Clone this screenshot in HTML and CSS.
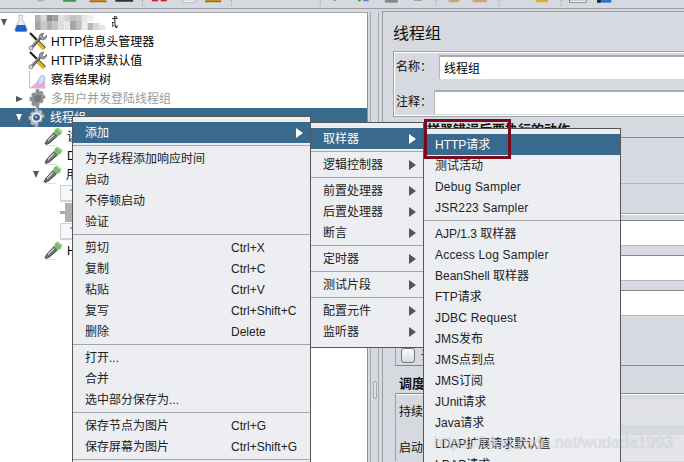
FILE: index.html
```html
<!DOCTYPE html>
<html lang="zh">
<head>
<meta charset="utf-8">
<title>JMeter</title>
<link rel="stylesheet" href="styles.css">
</head>
<body>
<svg class="defs" width="0" height="0">
  <defs>
    <symbol id="tools" viewBox="0 0 19 19">
      <path d="M2 1 L17 16" stroke="#222" stroke-width="2.2" fill="none"/>
      <path d="M9 10 L15 16" stroke="#e8b020" stroke-width="3.6" stroke-linecap="round" fill="none"/>
      <path d="M3 16 L13 5" stroke="#8d8f93" stroke-width="3" fill="none"/>
      <path d="M3.5 17 L13.5 5.5" stroke="#333" stroke-width="1" fill="none"/>
      <path d="M12 2.5 L15.5 1 L14 4.5 L16 6 L18.5 3.5 C18.8 6.5 16.5 8.5 13.5 7.5 C11.5 6.5 11 4 12 2.5Z" fill="#a5a7ab" stroke="#444" stroke-width=".7"/>
      <circle cx="3" cy="16" r="2" fill="#ddd" stroke="#666" stroke-width=".7"/>
    </symbol>
    <symbol id="gear" viewBox="0 0 19 19">
      <path d="M8 0h3l.6 2.6 2-.9 2.2 2.2-1 2 2.6.7v3l-2.6.7.9 2-2.1 2.200-2-1L11 19H8l-.7-2.600-2 1-2.100-2.100.9-2L1.500 11.200v-3l2.600-.7-1-2L5.300 3.300l2 .9z" fill="#8f9194"/>
      <circle cx="9.500" cy="9.500" r="3.500" fill="#76787b"/>
    </symbol>
    <symbol id="gear-on" viewBox="0 0 19 19">
      <path d="M8 0h3l.6 2.600 2-.9 2.200 2.200-1 2 2.600.7v3l-2.600.7.9 2-2.100 2.200-2-1L11 19H8l-.7-2.600-2 1-2.100-2.100.9-2L1.500 11.200v-3l2.600-.7-1-2L5.300 3.300l2 .9z" fill="#b9bbbe" stroke="#777" stroke-width=".5"/>
      <circle cx="9.500" cy="9.500" r="5" fill="#eef1f5"/>
      <circle cx="9.500" cy="9.500" r="3.300" fill="#2f5f9e"/>
      <circle cx="9" cy="9" r="1.300" fill="#8fb3e0"/>
    </symbol>
    <symbol id="dropper" viewBox="0 0 19 19">
      <path d="M1 18 C6 19 10 18.500 13 18" stroke="#ddd" stroke-width="1" fill="none"/>
      <path d="M1 16.500 L3 13 L10 5.500 L13.500 9 L5.500 16 L2 17.500Z" fill="#6f7276" stroke="#2e3033" stroke-width=".8"/>
      <path d="M4 13.500 L10 7.500" stroke="#d8dadd" stroke-width="1.100"/>
      <path d="M11 2.500 L14 0.500 L18.500 4 L16.500 8 L13.500 9 L10 5.500Z" fill="#7cb96a"/>
      <path d="M14 1.500 L17.500 4.500" stroke="#b9e2a8" stroke-width="1.400"/>
    </symbol>
  </defs>
</svg>

<div class="page">
  <header class="toolbar">
    <svg class="toolbar-art" width="684" height="9" viewBox="0 0 684 9">
      <rect x="0" y="0" width="6" height="1" fill="#fff" stroke="#777" stroke-width=".5"/>
      <rect x="28" y="0" width="15" height="2" rx="1" fill="#3e9b3e"/>
      <rect x="58" y="0" width="19" height="2" fill="#c88a1e"/><rect x="58" y="1.500" width="19" height="1" fill="#7e5c1e"/>
      <rect x="87" y="0" width="20" height="2" fill="#35373a"/>
      <rect x="128" y="0" width="7" height="1.500" fill="#cc2020"/><rect x="138" y="0" width="7" height="1.500" fill="#cc2020"/>
      <rect x="163" y="0" width="14" height="2.500" fill="#f4f4f4" stroke="#8a8a8a" stroke-width=".5"/>
      <rect x="188" y="0" width="18" height="2" fill="#c88a1e"/><rect x="188" y="1.500" width="18" height="1" fill="#7e5c1e"/>
      <rect x="333" y="0" width="2" height="1" fill="#2fa02f"/>
      <rect x="360" y="0" width="3" height="1.500" fill="#3c9c50"/><rect x="366" y="0" width="6" height="1.500" fill="#5c86c8"/>
      <rect x="390" y="0" width="15" height="3" rx="1.500" fill="#85878a"/>
      <rect x="423" y="0" width="9" height="1" fill="#9a9a9a"/>
      <rect x="462" y="0" width="12" height="2.500" fill="#c8a87a"/>
      <rect x="489" y="0" width="16" height="2.500" fill="#c8a87a"/>
      <rect x="560" y="0" width="14" height="2.500" fill="#d4b030"/>
      <rect x="598" y="0" width="19" height="2.500" fill="#fff" stroke="#555" stroke-width=".7"/>
      <rect x="629" y="0" width="16" height="3" fill="#2f72c8"/><rect x="629" y="0" width="4" height="3" fill="#222"/>
      <path d="M117.500 0V8M217.500 0V8M317.500 0V8M447.500 0V8M518.500 0V8M588.500 0V8" stroke="#85878c" stroke-dasharray="1 2"/>
    </svg>
  </header>

  <main class="workspace">
    <nav class="tree">
      <div class="row lvl0">
        <span class="twist open"></span>
        <svg class="icon flask" viewBox="0 0 14 18" width="14" height="18">
          <path d="M5 1h3.500v5L13.500 15.500 12.500 17.500H1.500L.5 15.500 5 6Z" fill="#e8eef6" stroke="#a9b3c4" stroke-width=".8"/>
          <path d="M3 11h8l2 5-1 1.500H2L1 16Z" fill="#1d62c4"/>
        </svg>
        <svg class="mosaic" viewBox="0 0 79 15" width="77" height="15" preserveAspectRatio="none">
          <rect x="0" y="0" width="79" height="15" fill="#fff"/>
          <rect x="0" width="6" height="6" fill="#b4b4b4"/><rect x="6" width="6" height="6" fill="#d8d8d8"/><rect x="12" width="6" height="6" fill="#8d8d8d"/><rect x="18" width="6" height="6" fill="#9e9e9e"/><rect x="24" width="6" height="6" fill="#e2e2e2"/><rect x="30" width="6" height="6" fill="#d4d4d4"/><rect x="36" width="6" height="6" fill="#c0c0c0"/><rect x="42" width="6" height="6" fill="#c9c9c9"/><rect x="48" width="6" height="6" fill="#e6e6e6"/><rect x="54" width="6" height="6" fill="#f0f0f0"/>
          <rect x="0" y="6" width="6" height="9" fill="#a6a6a6"/><rect x="6" y="6" width="6" height="9" fill="#c8c8c8"/><rect x="12" y="6" width="6" height="9" fill="#b0b0b0"/><rect x="18" y="6" width="6" height="9" fill="#c4c4c4"/><rect x="24" y="6" width="6" height="9" fill="#dedede"/><rect x="30" y="6" width="6" height="9" fill="#e8e8e8"/><rect x="36" y="6" width="6" height="9" fill="#a4a4a4"/><rect x="42" y="6" width="6" height="9" fill="#bdbdbd"/><rect x="48" y="6" width="6" height="9" fill="#ececec"/><rect x="54" y="8" width="6" height="7" fill="#b8b8b8"/><rect x="60" y="8" width="6" height="7" fill="#d8d8d8"/><rect x="66" y="10" width="6" height="5" fill="#e4e4e4"/>
        </svg>
        <span class="label tail">试</span>
      </div>
      <div class="row lvl1"><svg class="icon" width="19" height="19"><use href="#tools"/></svg><span class="label">HTTP信息头管理器</span></div>
      <div class="row lvl1"><svg class="icon" width="19" height="19"><use href="#tools"/></svg><span class="label">HTTP请求默认值</span></div>
      <div class="row lvl1">
        <svg class="icon" viewBox="0 0 19 19" width="19" height="19">
          <path d="M1.500 1V18H18" stroke="#bfc0c4" fill="none"/>
          <path d="M2 18 C6 14 9 13 11 9 C12 5 16 4 17 7 L17 18Z" fill="#f4a6d8"/>
          <path d="M10 14 C10 8 13 5 16 6 C18 8 16 13 12 15Z" fill="#cfe3f5" stroke="#8ab4dc" stroke-width=".7"/>
        </svg>
        <span class="label">察看结果树</span>
      </div>
      <div class="row lvl1 has-twist"><span class="twist closed"></span><svg class="icon" width="19" height="19"><use href="#gear"/></svg><span class="label muted">多用户并发登陆线程组</span></div>
      <div class="row lvl1 has-twist selected"><span class="twist open on"></span><svg class="icon" width="19" height="19"><use href="#gear-on"/></svg><span class="label">线程组</span></div>
      <div class="row lvl2"><svg class="icon" width="19" height="19"><use href="#dropper"/></svg><span class="label">读取配置</span></div>
      <div class="row lvl2"><svg class="icon" width="19" height="19"><use href="#dropper"/></svg><span class="label">Debug</span></div>
      <div class="row lvl2 has-twist"><span class="twist open"></span><svg class="icon" width="19" height="19"><use href="#dropper"/></svg><span class="label">用户登录</span></div>
      <div class="row lvl3"><span class="doc"></span></div>
      <div class="row lvl3"><span class="plug"></span></div>
      <div class="row lvl3"><span class="doc"></span></div>
      <div class="row lvl2"><svg class="icon" width="19" height="19"><use href="#dropper"/></svg><span class="label">HTTP请求</span></div>
    </nav>

    <div class="splitter"><span class="grip"></span></div>

    <section class="panel">
      <h1 class="panel-title">线程组</h1>
      <div class="box name-box">
        <div class="name-row">
          <span class="name-label">名称：</span>
          <span class="name-input">线程组</span>
        </div>
        <div class="name-row note">
          <span class="name-label short">注释：</span>
          <span class="name-input"></span>
        </div>
      </div>

      <h2 class="group-title action-title">在取样器错误后要执行的动作</h2>
      <div class="action-box"></div>

      <div class="props">
        <div class="prop"><span class="prop-label">线程数：</span><span class="prop-input"></span></div>
        <div class="prop"><span class="prop-label">Ramp-Up时间（秒）：</span><span class="prop-input"></span></div>
        <div class="prop"><span class="prop-label">循环次数</span><span class="prop-input"></span></div>
        <div class="check-row"><span class="check"></span><span class="check-text">调度器</span></div>
      </div>

      <h2 class="group-title sched-title">调度器配置</h2>
      <div class="sched">
        <div class="sched-row first"><span>持续时间（秒）</span><span class="sched-input"></span></div>
        <div class="sched-row"><span>启动延迟（秒）</span><span class="sched-input alt"></span></div>
      </div>
    </section>
  </main>
</div>

<div class="menu menu-main">
  <div class="item active"><span class="text">添加</span><span class="arrow"></span></div>
  <div class="sep"></div>
  <div class="item"><span class="text">为子线程添加响应时间</span></div>
  <div class="item"><span class="text">启动</span></div>
  <div class="item"><span class="text">不停顿启动</span></div>
  <div class="item"><span class="text">验证</span></div>
  <div class="sep"></div>
  <div class="item"><span class="text">剪切</span><span class="key">Ctrl+X</span></div>
  <div class="item"><span class="text">复制</span><span class="key">Ctrl+C</span></div>
  <div class="item"><span class="text">粘贴</span><span class="key">Ctrl+V</span></div>
  <div class="item"><span class="text">复写</span><span class="key">Ctrl+Shift+C</span></div>
  <div class="item"><span class="text">删除</span><span class="key">Delete</span></div>
  <div class="sep"></div>
  <div class="item"><span class="text">打开...</span></div>
  <div class="item"><span class="text">合并</span></div>
  <div class="item"><span class="text">选中部分保存为...</span></div>
  <div class="sep"></div>
  <div class="item"><span class="text">保存节点为图片</span><span class="key">Ctrl+G</span></div>
  <div class="item"><span class="text">保存屏幕为图片</span><span class="key">Ctrl+Shift+G</span></div>
  <div class="sep"></div>
</div>

<div class="menu menu-add">
  <div class="item active"><span class="text">取样器</span><span class="arrow"></span></div>
  <div class="sep"></div>
  <div class="item"><span class="text">逻辑控制器</span><span class="arrow"></span></div>
  <div class="sep"></div>
  <div class="item"><span class="text">前置处理器</span><span class="arrow"></span></div>
  <div class="item"><span class="text">后置处理器</span><span class="arrow"></span></div>
  <div class="item"><span class="text">断言</span><span class="arrow"></span></div>
  <div class="sep"></div>
  <div class="item"><span class="text">定时器</span><span class="arrow"></span></div>
  <div class="sep"></div>
  <div class="item"><span class="text">测试片段</span><span class="arrow"></span></div>
  <div class="sep"></div>
  <div class="item"><span class="text">配置元件</span><span class="arrow"></span></div>
  <div class="item"><span class="text">监听器</span><span class="arrow"></span></div>
</div>

<div class="menu menu-sampler">
  <div class="item active"><span class="text">HTTP请求</span></div>
  <div class="item"><span class="text">测试活动</span></div>
  <div class="item"><span class="text latin">Debug Sampler</span></div>
  <div class="item"><span class="text latin">JSR223 Sampler</span></div>
  <div class="sep"></div>
  <div class="item"><span class="text">AJP/1.3 取样器</span></div>
  <div class="item"><span class="text latin">Access Log Sampler</span></div>
  <div class="item"><span class="text">BeanShell 取样器</span></div>
  <div class="item"><span class="text">FTP请求</span></div>
  <div class="item"><span class="text latin">JDBC Request</span></div>
  <div class="item"><span class="text">JMS发布</span></div>
  <div class="item"><span class="text">JMS点到点</span></div>
  <div class="item"><span class="text">JMS订阅</span></div>
  <div class="item"><span class="text">JUnit请求</span></div>
  <div class="item"><span class="text">Java请求</span></div>
  <div class="item"><span class="text">LDAP扩展请求默认值</span></div>
  <div class="item"><span class="text">LDAP请求</span></div>
</div>

<div class="callout"></div>
<div class="watermark">https://blog.csdn.net/wudada1993</div>
</body>
</html>
```

FILE: styles.css
```css
* { box-sizing: border-box; }
html, body { margin: 0; padding: 0; width: 684px; height: 462px; overflow: hidden; }
body {
  position: relative;
  font: 12px/1 "Liberation Sans", "Noto Sans CJK SC", sans-serif;
  color: #1c1c1c;
  background: #d6d9df;
}
.defs { position: absolute; }

.page { display: flex; flex-direction: column; height: 462px; }

.toolbar { height: 12px; flex: none; background: #d6d9df; }
.toolbar-art { display: block; border-bottom: 1px solid #9a9ca3; }

.workspace { display: flex; flex: 1; min-height: 0; }

/* tree */
.tree { width: 368px; flex: none; background: #fff; border-top: 1px solid #a4a6ac; border-right: 1px solid #8d8f95; }
.row { display: flex; align-items: center; height: 19px; font-size: 12px; color: #000; white-space: nowrap; }
.lvl0 { padding-left: 1px; }
.lvl1 { padding-left: 28px; }
.lvl1.has-twist { padding-left: 16px; }
.lvl2 { padding-left: 44px; }
.lvl2.has-twist { padding-left: 33px; }
.lvl3 { padding-left: 60px; }
.icon { flex: none; display: block; }
.flask { margin-left: 2px; }
.mosaic { flex: none; margin-left: 7px; margin-right: -6px; position: relative; z-index: 1; }
.label { margin-left: 4px; }
.tail { margin-left: 0; }
.muted { color: #9b9b9b; }
.selected { background: #39698c; color: #fff; }
.twist { flex: none; width: 0; height: 0; }
.twist.open { border-left: 3.5px solid transparent; border-right: 3.5px solid transparent; border-top: 7px solid #555; margin-right: 5px; }
.twist.closed { border-top: 3.5px solid transparent; border-bottom: 3.5px solid transparent; border-left: 7px solid #555; margin-right: 5px; }
.lvl2.has-twist .twist { margin-right: 4px; }
.twist.on { border-top-color: #fff; }
.doc { display: block; position: relative; width: 15px; height: 17px; background: #f7f7f7; border: 1px solid #d2d2d2; border-bottom-width: 2px; }
.doc::after { content: ""; position: absolute; right: 0; top: 3px; width: 4px; height: 2px; background: #8fb0d0; }
.plug { display: flex; width: 16px; height: 19px; align-items: center; }
.plug::before { content: ""; display: block; width: 5px; height: 3px; background: #a8a8a8; }
.plug::after { content: ""; display: block; width: 10px; height: 19px; background: #b0b0b0; }

/* splitter */
.splitter {
  width: 14px; flex: none;
  padding: 369px 0 0 2px;
  background: linear-gradient(90deg, transparent 2px, #a8aab0 2px 3px, transparent 3px 10px, #a8aab0 10px 11px, transparent 11px);
}
.grip { display: block; width: 4px; height: 18px; margin-left: 3px; border: 1px solid #a8aab0; border-radius: 2px; background: #dfe1e6; }

/* right panel */
.panel {
  flex: 1; min-width: 0; overflow: hidden;
  padding: 14px 0 0 10px;
  background: #d6d9df;
  border-left: 1px solid #9a9ca3;
  border-top: 1px solid #9a9ca3;
  margin-top: -1px;
}
.panel-title { margin: 0 0 9px; font-size: 16px; font-weight: normal; line-height: 16px; color: #111; }
.box { border: 1px solid #a0a2a8; box-shadow: inset 0 0 0 1px #fff; }
.name-box { height: 66px; width: 320px; padding: 3px 0 0 2px; }
.name-row { display: flex; align-items: center; height: 24px; }
.name-row.note { margin-top: 11px; }
.name-label { width: 43px; flex: none; color: #111; }
.name-label.short { width: 38px; }
.name-input {
  flex: 1; height: 24px; padding: 6px 0 0 4px;
  background: #fff; color: #000;
  border-top: 2px solid #a9abb1; border-left: 1px solid #b3b5bb;
}
.group-title { margin: 0; font-size: 13px; line-height: 14px; font-weight: bold; color: #111; white-space: nowrap; }
.action-title { margin: 0 0 0 8px; padding-top: 6px; height: 20px; }
.action-box { height: 47px; width: 320px; border-top: 1px solid #85878c; border-bottom: 1px solid #b4b6bc; }
.props {
  width: 320px; height: 153px; margin: 29px 0 0 2px;
  border-top: 1px solid #a0a2a8; box-shadow: inset 0 1px 0 #fff;
  border-left: 1px solid #9fa1a7; border-bottom: 1px solid #85878c;
}
.prop { display: flex; align-items: center; height: 26px; margin-top: 6px; }
.prop + .prop { margin-top: 9px; }
.prop-label { width: 90px; flex: none; padding-left: 4px; }
.prop-input { flex: 1; height: 26px; background: #fff; border-top: 1px solid #85878c; border-bottom: 1px solid #b4b6bc; }
.check-row { display: flex; align-items: center; gap: 6px; margin: 32px 0 0 5px; }
.check { display: block; width: 14px; height: 15px; flex: none; background: linear-gradient(#fdfdfd, #d8dade); border: 1px solid #75777c; border-radius: 3px; }
.sched-title { margin: 11px 0 0 6px; height: 16px; line-height: 14px; }
.sched { width: 320px; margin: 0 0 0 2px; border-top: 1px solid #85878c; border-left: 1px solid #9fa1a7; box-shadow: inset 0 1px 0 #fff; padding: 5px 0 0 3px; }
.sched-row { display: flex; align-items: center; height: 26px; }
.sched-row.first { margin-bottom: 10px; }
.sched-row span:first-child { width: 200px; flex: none; color: #111; }
.sched-input { flex: 1; height: 26px; background: #dfe1e6; }
.sched-input.alt { background: #e3e5e8; }

/* context menus */
.menu { position: absolute; background: #eceef2; border: 1px solid #55575b; padding: 5px 0; color: #222; }
.menu-main { left: 72px; top: 116px; width: 239px; height: 360px; }
.menu-add { left: 310px; top: 122px; width: 114px; }
.menu-sampler { left: 423px; top: 128px; width: 198px; height: 360px; }
.item { display: flex; align-items: center; height: 21px; padding: 0 7px 0 12px; white-space: nowrap; }
.menu-sampler .item { padding-left: 11px; }
.latin { letter-spacing: .2px; }
.item.active { background: #39698c; color: #fff; }
.menu-main .text { width: 146px; flex: none; }
.key { flex: none; }
.menu-main .item .arrow, .menu-add .arrow { margin-left: auto; }
.menu-main .item.active .text { width: auto; }
.arrow { width: 0; height: 0; border-top: 5px solid transparent; border-bottom: 5px solid transparent; border-left: 7px solid #555; }
.active .arrow { border-left-color: #fff; }
.sep { height: 1px; margin: 2px 0; background: #a4a6ac; }

.callout { position: absolute; left: 424px; top: 119px; width: 87px; height: 40px; border: 3px solid #7c0a1e; }
.watermark {
  position: absolute; left: 434px; top: 435px;
  font: 16px/16px "Liberation Sans", sans-serif;
  color: rgba(255, 255, 255, .55);
  text-shadow: 0 0 1px rgba(0, 0, 0, .25);
  white-space: nowrap;
}
```
